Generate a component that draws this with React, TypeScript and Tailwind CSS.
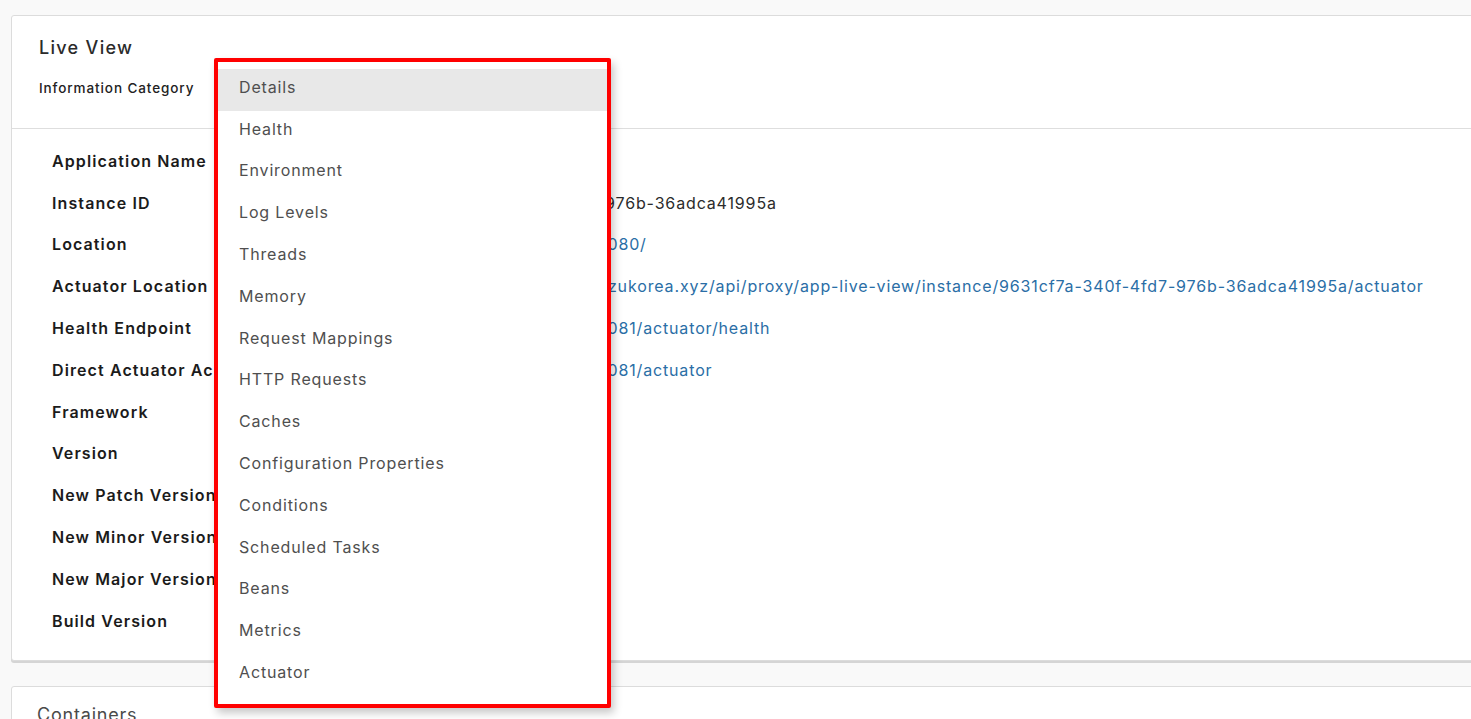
import React from "react";

const rows: { label: string; value: string; link?: boolean }[] = [
  { label: "Application Name", value: "" },
  { label: "Instance ID", value: "9631cf7a-340f-4fd7-976b-36adca41995a" },
  { label: "Location", value: "http://172.16.100.112:8080/", link: true },
  {
    label: "Actuator Location",
    value:
      "https://tapgui.dev.tanzukorea.xyz/api/proxy/app-live-view/instance/9631cf7a-340f-4fd7-976b-36adca41995a/actuator",
    link: true,
  },
  { label: "Health Endpoint", value: "http://172.16.100.112:8081/actuator/health", link: true },
  { label: "Direct Actuator Access", value: "http://172.16.100.112:8081/actuator", link: true },
  { label: "Framework", value: "" },
  { label: "Version", value: "" },
  { label: "New Patch Version", value: "" },
  { label: "New Minor Version", value: "" },
  { label: "New Major Version", value: "" },
  { label: "Build Version", value: "" },
];

const items = [
  "Details",
  "Health",
  "Environment",
  "Log Levels",
  "Threads",
  "Memory",
  "Request Mappings",
  "HTTP Requests",
  "Caches",
  "Configuration Properties",
  "Conditions",
  "Scheduled Tasks",
  "Beans",
  "Metrics",
  "Actuator",
];

export default function App() {
  return (
    <div
      className="relative w-[1471px] h-[719px] overflow-hidden bg-[#f9f9f9] pt-[15px]"
      style={{ fontFamily: "Inter, 'Open Sans', sans-serif" }}
    >
      <div className="ml-[11px] w-[1480px] bg-white border border-[#dcdcdc] rounded-[3px] shadow-[0_2px_0_0_#d5d5d5]">
        <div className="h-[113px] border-b border-[#dedede] pl-[27px] pt-[20px]">
          <div className="text-[18px] leading-[24px] font-medium tracking-[1.3px] text-[#2b2b2b]">Live View</div>
          <div className="mt-[18px] text-[13.5px] leading-[20px] font-medium tracking-[0.9px] text-[#222]">
            Information Category
          </div>
        </div>
        <div className="pt-[11px] pb-[18px] pl-[40px]">
          {rows.map((r) => (
            <div key={r.label} className="flex items-center h-[41.8px] text-[16px] tracking-[0.85px]">
              <div className="w-[376px] shrink-0 font-semibold text-[#1b1b1b] tracking-[1.1px]">{r.label}</div>
              <div className={r.link ? "text-[#2a6ea6] whitespace-nowrap" : "text-[#2b2b2b] whitespace-nowrap"}>
                {r.value}
              </div>
            </div>
          ))}
        </div>
      </div>

      <div className="mt-[25px] ml-[11px] w-[1480px] h-[60px] bg-white border border-[#dcdcdc] rounded-[3px] pl-[25px] pt-[16px]">
        <div className="text-[18px] leading-[24px] tracking-[0.8px] text-[#4a4a4a]">Containers</div>
      </div>

      <div className="absolute left-[214px] top-[58px] w-[397px] h-[650px] border-[4px] border-[#ff0000] rounded-[2px] bg-white shadow-[3px_5px_8px_rgba(0,0,0,0.22)] pt-[7px]">
        {items.map((it, i) => (
          <div
            key={it}
            className={
              "h-[41.8px] flex items-center pl-[21px] pb-[6px] text-[16px] tracking-[0.85px] text-[#4f4f4f] " +
              (i === 0 ? "bg-[#e8e8e8]" : "")
            }
          >
            {it}
          </div>
        ))}
      </div>
    </div>
  );
}
